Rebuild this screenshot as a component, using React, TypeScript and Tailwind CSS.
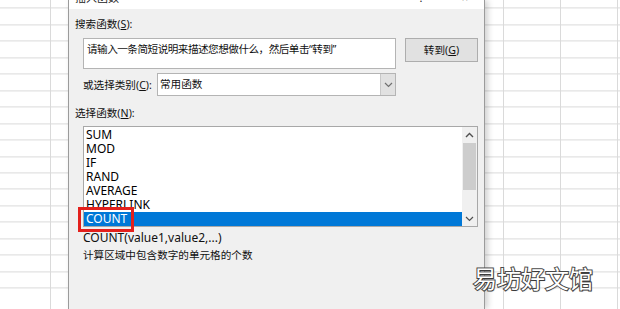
import React from "react";

const gridBg =
  "bg-[repeating-linear-gradient(to_bottom,transparent_0px,transparent_15.45px,#dadada_15.45px,#dadada_16.45px)] bg-[position:0_-7.6px]";

function ChevronUp() {
  return (
    <svg width="9" height="6" viewBox="0 0 9 6">
      <polyline points="1,5 4.5,1.5 8,5" fill="none" stroke="#505050" strokeWidth="1.4" />
    </svg>
  );
}
function ChevronDown({ color = "#505050" }: { color?: string }) {
  return (
    <svg width="9" height="6" viewBox="0 0 9 6">
      <polyline points="1,1 4.5,4.5 8,1" fill="none" stroke={color} strokeWidth="1.2" />
    </svg>
  );
}

const items = ["SUM", "MOD", "IF", "RAND", "AVERAGE", "HYPERLINK", "COUNT"];

export default function App() {
  const cjk = "font-['Noto_Sans','Noto_Sans_CJK_SC',sans-serif]";
  return (
    <div className={`relative w-[620px] h-[309px] overflow-hidden bg-white flex ${cjk}`}>
      {/* left sheet strip */}
      <div className={`w-[68px] h-full flex ${gridBg}`}>
        <div className="w-[51px] h-full border-r border-[#dadada]" />
        <div className="flex-1 h-full" />
      </div>

      {/* dialog */}
      <div className="relative z-10 w-[417px] h-full bg-[#f0f0f0] border-l border-r border-[#9b9b9b] shadow-[3px_0_6px_rgba(0,0,0,0.18)] flex flex-col">
        <div className="h-[9px] bg-white overflow-hidden flex items-end px-[6px] text-[11px] leading-[12px] text-[#222]">
          <span className="mb-[5px]">插入函数</span>
          <span className="ml-auto mb-[5px] mr-[38px]">?</span>
          <span className="mb-[5px] mr-[10px]">×</span>
        </div>
        <div className="flex flex-col pl-[6px] text-[10.6px] text-[#111]">
          <div className="mt-[8px] h-[14px] leading-[14px]">搜索函数(<span className="underline">S</span>):</div>
          <div className="mt-[7px] ml-[8px] flex items-start">
            <div className="w-[313px] h-[31px] bg-white border border-[#b4b4b4] px-[3px] pt-[3px] leading-[14px] tracking-[-0.5px]">
              请输入一条简短说明来描述您想做什么，然后单击“转到”
            </div>
            <div className="ml-[9px] w-[73px] h-[24px] bg-[#e1e1e1] border border-[#adadad] flex items-center justify-center leading-none">
              转到(<span className="underline">G</span>)
            </div>
          </div>
          <div className="mt-[4px] ml-[8px] flex items-center">
            <div className="w-[74px] leading-[14px]">或选择类别(<span className="underline">C</span>):</div>
            <div className="w-[239px] h-[23px] bg-white border border-[#b4b4b4] flex items-stretch">
              <div className="flex-1 pl-[2px] flex items-center">常用函数</div>
              <div className="w-[15px] bg-[#e1e1e1] border-l border-[#c8c8c8] flex items-center justify-center">
                <ChevronDown color="#707070" />
              </div>
            </div>
          </div>
          <div className="mt-[10px] h-[14px] leading-[14px]">选择函数(<span className="underline">N</span>):</div>
          <div className="relative mt-[6px] ml-[8px] w-[395px] h-[101px] bg-white border border-[#a8a8a8] flex">
            <div className="flex-1 pt-[1px] flex flex-col overflow-hidden text-[12px] text-black">
              {items.map((it, i) => (
                <div
                  key={it}
                  className={
                    i === items.length - 1
                      ? "h-[14px] leading-[14px] pl-[2px] bg-[#0078d7] text-white"
                      : "h-[14px] leading-[14px] pl-[2px]"
                  }
                >
                  {it}
                </div>
              ))}
            </div>
            <div className="w-[15px] h-full bg-[#f0f0f0] flex flex-col">
              <div className="h-[16px] flex items-center justify-center">
                <ChevronUp />
              </div>
              <div className="mx-[1px] h-[47px] bg-[#cdcdcd]" />
              <div className="flex-1" />
              <div className="h-[15px] flex items-center justify-center">
                <ChevronDown />
              </div>
            </div>
            <div className="absolute left-[-6px] top-[80px] w-[56px] h-[25px] border-[3px] border-[#e3201c]" />
          </div>
          <div className="mt-[4px] ml-[8px] h-[14px] leading-[14px] text-[12px]">COUNT(value1,value2,...)</div>
          <div className="mt-[3px] ml-[8px] h-[14px] leading-[14px]">计算区域中包含数字的单元格的个数</div>
        </div>
      </div>

      {/* right sheet strip */}
      <div className={`flex-1 h-full flex ${gridBg}`}>
        <div className="w-[19px] h-full border-r border-[#dadada]" />
        <div className="w-[57px] h-full border-r border-[#dadada]" />
        <div className="w-[57px] h-full border-r border-[#dadada]" />
        <div className="flex-1 h-full" />
      </div>

      <div className="absolute z-20 left-[473px] top-[263px] text-[24px] leading-[30px] text-white font-['Noto_Sans_CJK_SC',sans-serif] [-webkit-text-stroke:2px_#4a4a4a] [paint-order:stroke_fill] [text-shadow:1px_1px_1px_rgba(0,0,0,0.25)]">
        易坊好文馆
      </div>
    </div>
  );
}
